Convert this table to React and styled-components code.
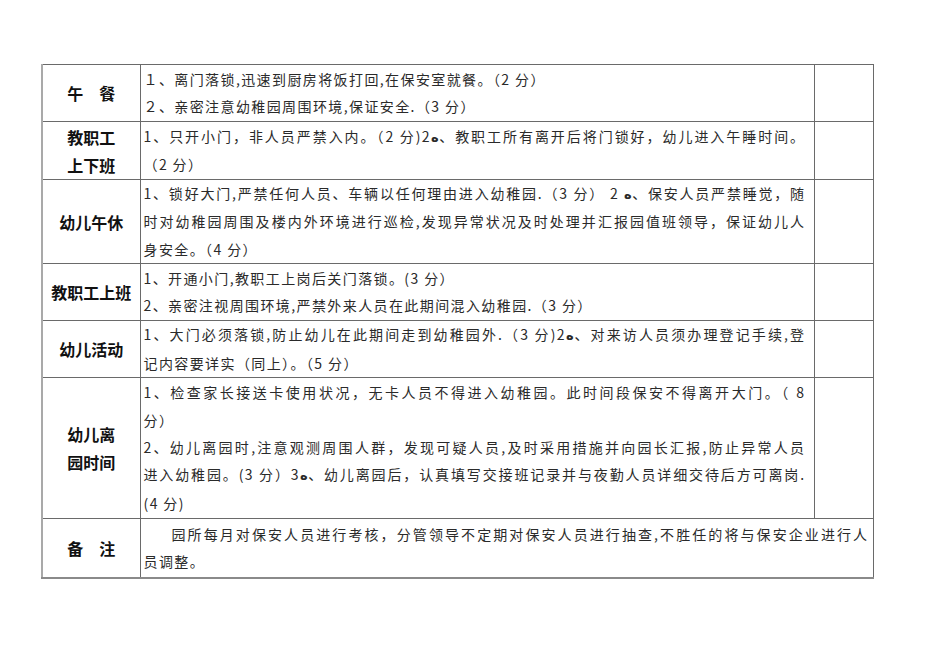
import React from 'react';
import styled, { createGlobalStyle } from 'styled-components';

const GlobalStyle = createGlobalStyle`
  html, body {
    margin: 0;
    padding: 0;
    background: #ffffff;
  }
  body {
    font-family: "Noto Sans CJK SC", "Noto Sans", sans-serif;
    color: #1a1a1a;
  }
`;

const Page = styled.div`
  width: 950px;
  height: 672px;
  padding: 64px 0 0 41px;
  box-sizing: border-box;
`;

const Sheet = styled.table`
  width: 831px;
  border-collapse: collapse;
  table-layout: fixed;
  border-left: 2px solid #a9a9a9;
  border-top: 1px solid #555;
  border-right: 1px solid #9a9a9a;
  border-bottom: 2px solid #8a8a8a;
`;

const Row = styled.tr`
  height: ${(p) => p.$h}px;
`;

const LabelCell = styled.td`
  border: 1px solid #6a6a6a;
  text-align: center;
  vertical-align: middle;
  font-size: 16px;
  font-weight: 700;
  line-height: 28px;
  color: #111;
  padding: 0;
`;

const ContentCell = styled.td`
  border: 1px solid #6a6a6a;
  vertical-align: middle;
  font-size: 14px;
  letter-spacing: 1.4px;
  line-height: 27.4px;
  color: #2a2a2a;
  padding: 0 ${(p) => p.$pr || 8}px 0 3px;
`;

const BlankCell = styled.td`
  border: 1px solid #6a6a6a;
`;

const Line = styled.div`
  text-align: ${(p) => (p.$full ? 'justify' : 'left')};
  text-align-last: ${(p) => (p.$full ? 'justify' : 'left')};
  text-indent: ${(p) => (p.$indent ? '2em' : '0')};
`;

const Mark = styled.span`
  unicode-bidi: isolate;
  font-family: "DejaVu Sans", sans-serif;
  font-weight: 700;
  font-size: 13px;
  letter-spacing: 0;
`;

const M = () => <Mark>ه</Mark>;

const rows = [
  {
    h: 57,
    label: ['午　餐'],
    lines: [
      { t: '１、离门落锁,迅速到厨房将饭打回,在保安室就餐。（2 分）' },
      { t: '２、亲密注意幼稚园周围环境,保证安全.（3 分）' },
    ],
  },
  {
    h: 58,
    label: ['教职工', '上下班'],
    lines: [
      { t: ['1、只开小门，非人员严禁入内。（2 分)2', <M key="m" />, '、教职工所有离开后将门锁好，幼儿进入午睡时间。'], full: true },
      { t: '（2 分）' },
    ],
  },
  {
    h: 83,
    label: ['幼儿午休'],
    lines: [
      { t: ['1、锁好大门,严禁任何人员、车辆以任何理由进入幼稚园.（3 分） 2 ', <M key="m" />, '、保安人员严禁睡觉，随'], full: true },
      { t: '时对幼稚园周围及楼内外环境进行巡检,发现异常状况及时处理并汇报园值班领导，保证幼儿人', full: true },
      { t: '身安全。（4 分）' },
    ],
  },
  {
    h: 57,
    label: ['教职工上班'],
    lines: [
      { t: '1、开通小门,教职工上岗后关门落锁。(3 分）' },
      { t: '2、亲密注视周围环境,严禁外来人员在此期间混入幼稚园.（3 分）' },
    ],
  },
  {
    h: 57,
    label: ['幼儿活动'],
    lines: [
      { t: ['1、大门必须落锁,防止幼儿在此期间走到幼稚园外.（3 分)2', <M key="m" />, '、对来访人员须办理登记手续,登'], full: true },
      { t: '记内容要详实（同上）。（5 分）' },
    ],
  },
  {
    h: 141,
    label: ['幼儿离', '园时间'],
    lines: [
      { t: '1、检查家长接送卡使用状况，无卡人员不得进入幼稚园。此时间段保安不得离开大门。（ 8', full: true },
      { t: '分）' },
      { t: '2、幼儿离园时,注意观测周围人群，发现可疑人员,及时采用措施并向园长汇报,防止异常人员', full: true },
      { t: ['进入幼稚园。(3 分）3', <M key="m" />, '、幼儿离园后，认真填写交接班记录并与夜勤人员详细交待后方可离岗.'], full: true },
      { t: '(4 分)' },
    ],
  },
];

const note = [
  { t: '园所每月对保安人员进行考核，分管领导不定期对保安人员进行抽查,不胜任的将与保安企业进行人', full: true, indent: true },
  { t: '员调整。' },
];

const renderLines = (lines) =>
  lines.map((l, i) => (
    <Line key={i} $full={l.full} $indent={l.indent}>
      {l.t}
    </Line>
  ));

const App = () => (
  <Page>
    <GlobalStyle />
    <Sheet>
      <colgroup>
        <col style={{ width: 98 }} />
        <col style={{ width: 674 }} />
        <col style={{ width: 59 }} />
      </colgroup>
      <tbody>
        {rows.map((r, i) => (
          <Row key={i} $h={r.h}>
            <LabelCell>
              {r.label.map((s) => (
                <div key={s}>{s}</div>
              ))}
            </LabelCell>
            <ContentCell>{renderLines(r.lines)}</ContentCell>
            <BlankCell />
          </Row>
        ))}
        <Row $h={59}>
          <LabelCell>备　注</LabelCell>
          <ContentCell colSpan={2} $pr={4}>
            {renderLines(note)}
          </ContentCell>
        </Row>
      </tbody>
    </Sheet>
  </Page>
);

export default App;
